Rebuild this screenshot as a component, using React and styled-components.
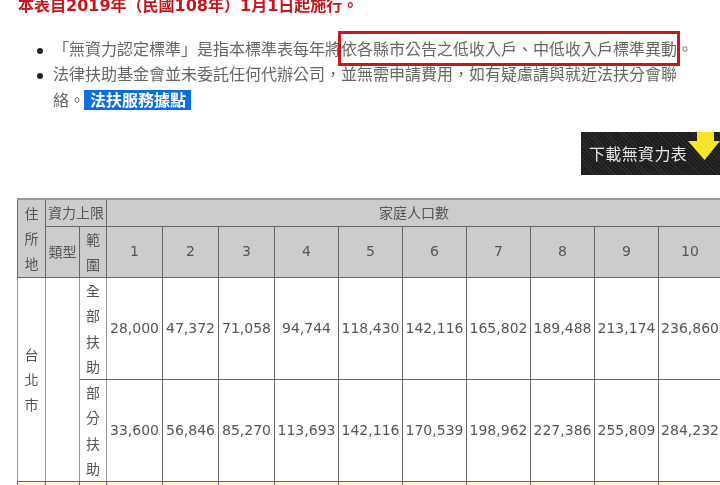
import React from "react";
import styled, { createGlobalStyle } from "styled-components";

const Global = createGlobalStyle`
  html, body { margin: 0; padding: 0; height: 485px; overflow: hidden; background: #fff; }
  body { font-family: "Noto Sans CJK TC", "DejaVu Sans", sans-serif; font-size: 16px; line-height: 25.6px; color: #666; }
`;

const Page = styled.div`
  width: 720px;
  height: 485px;
  overflow: hidden;
  filter: blur(0.4px);
`;

const Notice = styled.p`
  margin: -8px 0 0 18px;
  color: #c8161d;
  font-weight: 700;
  white-space: nowrap;
`;

const BoldDigits = styled.span`
  font-family: "DejaVu Sans", sans-serif;
  font-weight: 700;
`;

const Notes = styled.ul`
  margin: 17px 0 0 13px;
  padding: 0 0 0 40px;
  width: 646px;
  list-style: none;
`;

const Note = styled.li`
  position: relative;
  color: #666;
  &::before {
    content: "";
    position: absolute;
    left: -16px;
    top: 12px;
    width: 6px;
    height: 6px;
    border-radius: 50%;
    background: #222;
  }
`;

const Flagged = styled.span`
  position: relative;
  &::after {
    content: "";
    position: absolute;
    left: -3px;
    right: -3px;
    top: -5px;
    bottom: -6px;
    border: 3px solid #c8161d;
  }
`;

const ServiceLink = styled.a`
  display: inline-block;
  margin-left: -1px;
  padding: 0 5px 0 6px;
  height: 20px;
  line-height: 19px;
  vertical-align: 0;
  background: #0a6ee0;
  color: #fff;
  font-weight: 700;
`;

const DownloadRow = styled.div`
  display: flex;
  justify-content: flex-end;
  margin-top: 20px;
`;

const DownloadButton = styled.div`
  width: 139px;
  height: 43px;
  box-sizing: border-box;
  padding-left: 8px;
  display: flex;
  align-items: center;
  overflow: hidden;
  position: relative;
  background-color: #232323;
  background-image: repeating-linear-gradient(45deg, #2e2e2e 0 1px, #1d1d1d 1px 3px);
  color: #e8e8e8;
  font-size: 16px;
  letter-spacing: 0.35px;
  white-space: nowrap;
`;

const ArrowIcon = styled.svg`
  position: absolute;
  left: 107px;
  top: 0;
`;

const Table = styled.table`
  border-collapse: collapse;
  table-layout: fixed;
  width: 704px;
  margin: 23px 0 0 17px;
  font-size: 14px;
  line-height: 25.25px;
  color: #555;
  text-align: center;
  border-top: 2px solid #999;
`;

const Col = styled.col`
  width: ${(p) => p.$w}px;
`;

const Head = styled.th`
  padding: 0;
  font-weight: 400;
  background: #ccc;
  border: 1px solid #666;
`;

const NumberHead = styled(Head)`
  font-family: "DejaVu Sans", sans-serif;
`;

const Cell = styled.td`
  padding: 0;
  border: 1px solid #666;
  background: ${(p) => (p.$pale ? "#fdf7cf" : "#fff")};
  ${(p) => p.$soft && "border-left-color: #999; border-right-color: #999;"}
`;

const Amount = styled(Cell)`
  font-family: "DejaVu Sans", sans-serif;
`;

const widths = [28, 34, 27, 56, 56, 56, 64, 64, 64, 64, 64, 64, 63];
const people = [1, 2, 3, 4, 5, 6, 7, 8, 9, 10];
const full = ["28,000", "47,372", "71,058", "94,744", "118,430", "142,116", "165,802", "189,488", "213,174", "236,860"];
const partial = ["33,600", "56,846", "85,270", "113,693", "142,116", "170,539", "198,962", "227,386", "255,809", "284,232"];

export default function App() {
  return (
    <Page lang="zh-Hant">
      <Global />
      <Notice>
        本表自<BoldDigits>2019</BoldDigits>年（民國<BoldDigits>108</BoldDigits>年）<BoldDigits>1</BoldDigits>月<BoldDigits>1</BoldDigits>日起施行。
      </Notice>
      <Notes>
        <Note>
          「無資力認定標準」是指本標準表每年將<Flagged>依各縣市公告之低收入戶、中低收入戶標準異動</Flagged>。
        </Note>
        <Note>
          法律扶助基金會並未委託任何代辦公司，並無需申請費用，如有疑慮請與就近法扶分會聯絡。
          <ServiceLink>法扶服務據點</ServiceLink>
        </Note>
      </Notes>
      <DownloadRow>
        <DownloadButton>
          下載無資力表
          <ArrowIcon width="32" height="29" viewBox="0 0 32 29">
            <path d="M9 0h17v9h6L16.500 28 0 9h9z" fill="#f5e62a" />
          </ArrowIcon>
        </DownloadButton>
      </DownloadRow>
      <Table>
        <colgroup>
          {widths.map((w, i) => (
            <Col key={i} $w={w} />
          ))}
        </colgroup>
        <thead>
          <tr>
            <Head rowSpan={2}>住所地</Head>
            <Head colSpan={2}>資力上限</Head>
            <Head colSpan={10}>家庭人口數</Head>
          </tr>
          <tr>
            <Head>類型</Head>
            <Head>範圍</Head>
            {people.map((n) => (
              <NumberHead key={n}>{n}</NumberHead>
            ))}
          </tr>
        </thead>
        <tbody>
          <tr>
            <Cell rowSpan={2} $soft>台北市</Cell>
            <Cell rowSpan={2} $soft></Cell>
            <Cell $soft>全部扶助</Cell>
            {full.map((v) => (
              <Amount key={v}>{v}</Amount>
            ))}
          </tr>
          <tr>
            <Cell $soft>部分扶助</Cell>
            {partial.map((v) => (
              <Amount key={v}>{v}</Amount>
            ))}
          </tr>
          <tr>
            <Cell $pale>&nbsp;</Cell>
            <Cell $pale></Cell>
            <Cell $pale></Cell>
            {people.map((n) => (
              <Cell key={n} $pale></Cell>
            ))}
          </tr>
        </tbody>
      </Table>
    </Page>
  );
}
